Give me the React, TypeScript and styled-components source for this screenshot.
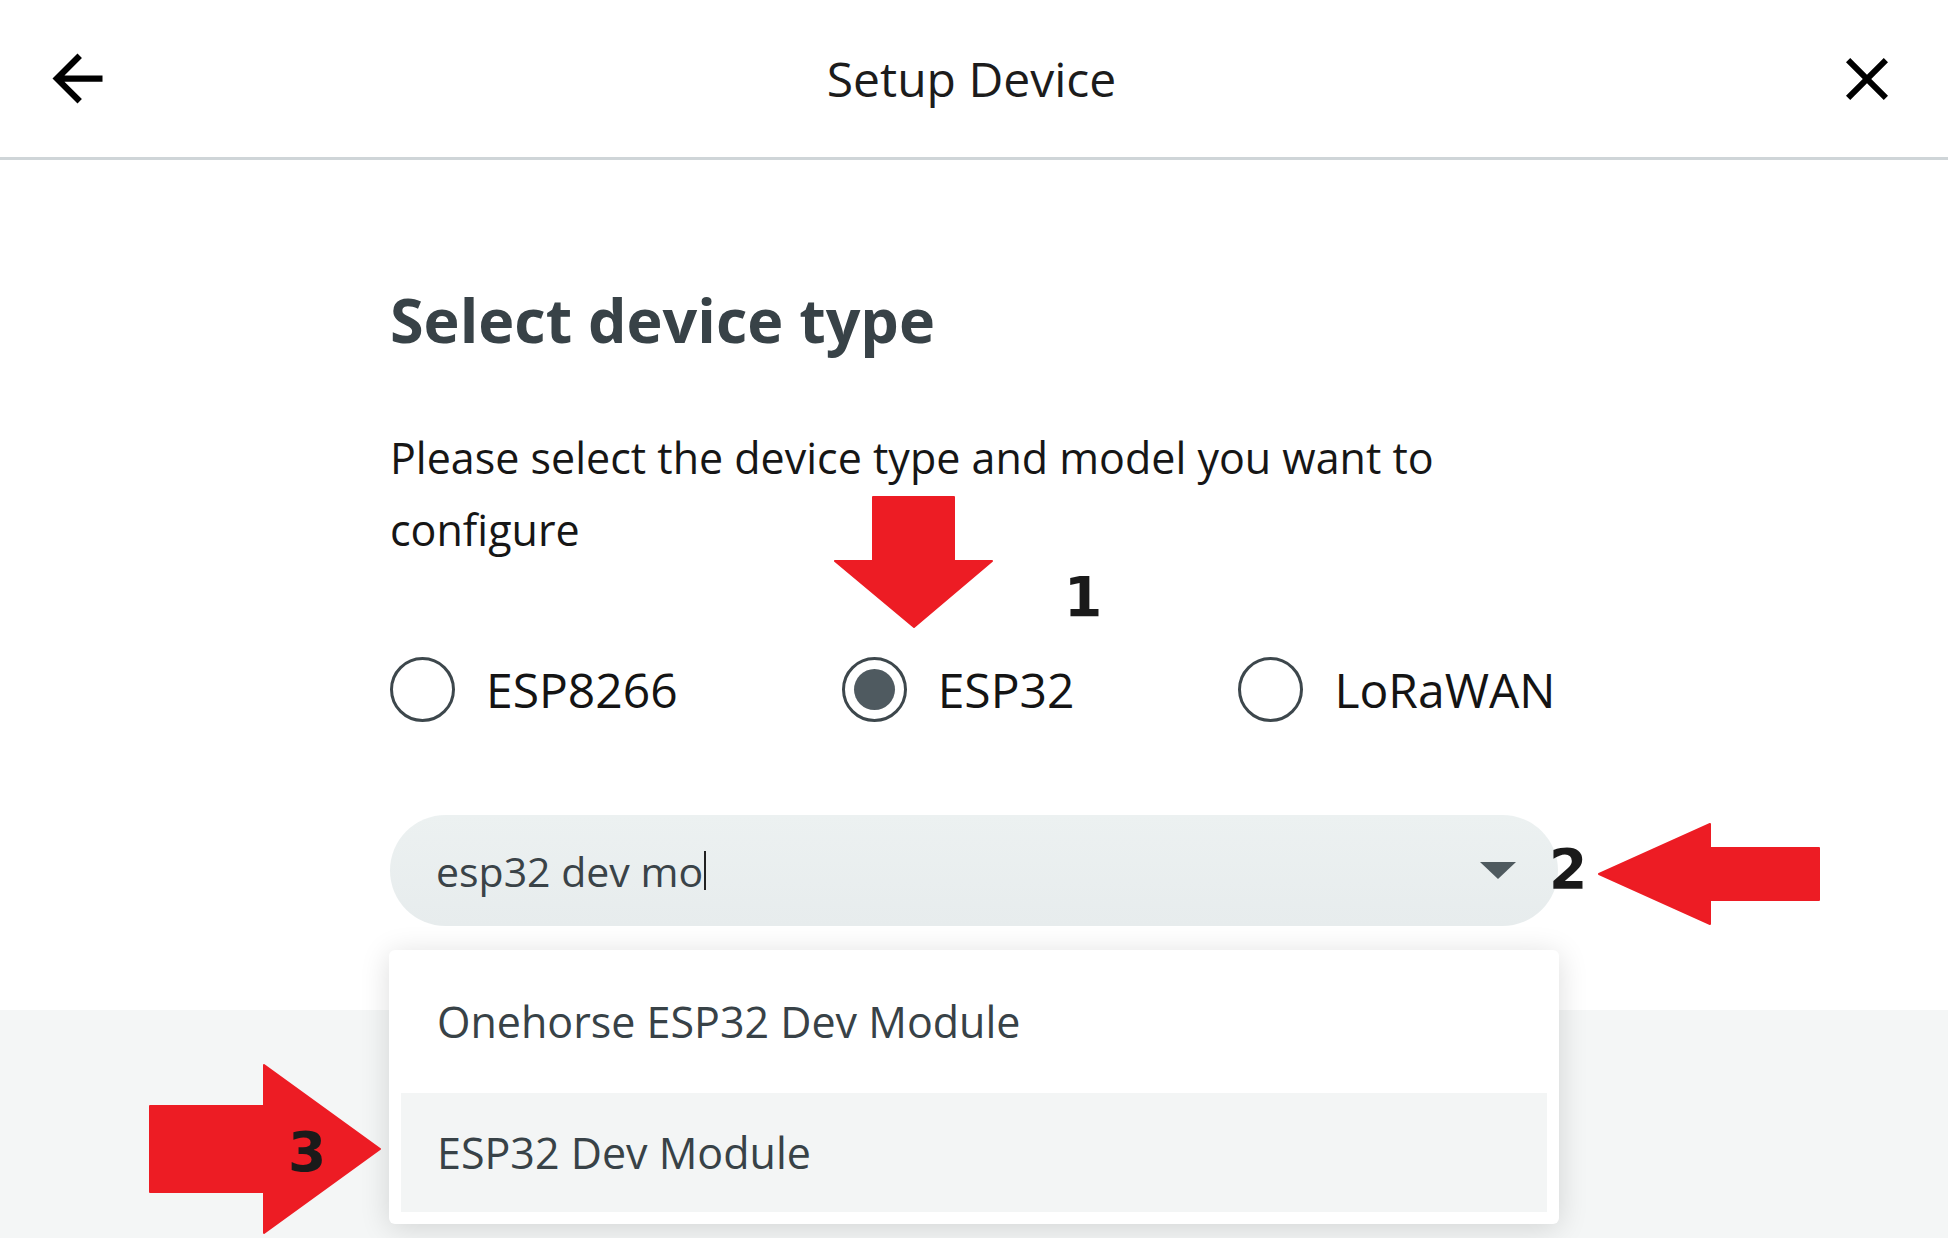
import React from "react";
import styled, { createGlobalStyle } from "styled-components";

const GlobalStyle = createGlobalStyle`
  html, body {
    margin: 0;
    padding: 0;
    background: #ffffff;
  }
  * {
    box-sizing: border-box;
  }
`;

const Page = styled.div`
  position: relative;
  width: 1948px;
  height: 100vh;
  min-height: 1238px;
  display: flex;
  flex-direction: column;
  overflow: hidden;
  font-family: "Open Sans", "Noto Sans", sans-serif;
`;

const Header = styled.header`
  height: 160px;
  flex: 0 0 auto;
  display: grid;
  grid-template-columns: 1fr auto 1fr;
  align-items: center;
  padding: 0 45px 0 40px;
  border-bottom: 3px solid #cfd5d8;
  background: #fff;
`;

const IconButton = styled.button<{ $align: "start" | "end" }>`
  justify-self: ${(p) => p.$align};
  border: none;
  background: none;
  padding: 0;
  display: flex;
  color: #000;
  cursor: pointer;
`;

const Title = styled.h1`
  margin: 0;
  font-size: 48px;
  font-weight: 400;
  line-height: 157px;
  color: #1c1c1c;
`;

const Main = styled.main`
  flex: 0 0 auto;
  background: #fff;
  padding: 123px 0 84px;
`;

const Content = styled.div`
  width: 1168px;
  margin: 0 auto;
`;

const Heading = styled.h2`
  margin: 0 0 66px;
  font-size: 61px;
  font-weight: 700;
  line-height: 73px;
  color: #384247;
`;

const Lead = styled.p`
  margin: 0;
  font-size: 43px;
  line-height: 72px;
  color: #161616;
`;

const RadioRow = styled.div`
  margin-top: 91px;
  height: 65px;
  display: flex;
  align-items: center;
  gap: 164px;
`;

const RadioOption = styled.label`
  display: flex;
  align-items: center;
  gap: 31px;
  font-size: 48px;
  line-height: 65px;
  color: #141414;
`;

const RadioCircle = styled.span<{ $checked?: boolean }>`
  width: 65px;
  height: 65px;
  border-radius: 50%;
  border: 3px solid #3d474c;
  display: flex;
  align-items: center;
  justify-content: center;
  &::after {
    content: "";
    width: 41px;
    height: 41px;
    border-radius: 50%;
    background: #4f5a60;
    display: ${(p) => (p.$checked ? "block" : "none")};
  }
`;

const ComboWrap = styled.div`
  position: relative;
  margin-top: 93px;
`;

const Combo = styled.div`
  height: 111px;
  border-radius: 56px;
  background: linear-gradient(#ecf1f1, #e7eced);
  display: flex;
  align-items: center;
  justify-content: space-between;
  padding: 0 42px 0 46px;
`;

const ComboText = styled.span`
  font-size: 41px;
  color: #3a4348;
  display: flex;
  align-items: center;
`;

const Caret = styled.span`
  display: inline-block;
  width: 2px;
  height: 39px;
  margin-left: 1px;
  background: #222;
`;

const Menu = styled.ul`
  position: absolute;
  top: calc(100% + 24px);
  left: -1px;
  width: 1170px;
  margin: 0;
  padding: 12px;
  list-style: none;
  background: #fff;
  border-radius: 6px;
  box-shadow: 0 4px 30px rgba(0, 0, 0, 0.14);
  display: flex;
  flex-direction: column;
  gap: 12px;
  z-index: 2;
`;

const MenuItem = styled.li<{ $active?: boolean }>`
  height: 119px;
  display: flex;
  align-items: center;
  padding-left: 36px;
  font-size: 43px;
  color: #384247;
  background: ${(p) => (p.$active ? "#f3f5f5" : "transparent")};
`;

const Footer = styled.footer`
  flex: 1 1 auto;
  background: #f4f6f6;
`;

const Annotations = styled.svg`
  position: absolute;
  left: 0;
  top: 0;
  width: 1948px;
  height: 1238px;
  pointer-events: none;
  z-index: 3;
`;

const StepNumber = styled.span<{ $x: number; $y: number }>`
  position: absolute;
  left: ${(p) => p.$x}px;
  top: ${(p) => p.$y}px;
  font-family: "DejaVu Sans", sans-serif;
  font-weight: 700;
  font-size: 55px;
  line-height: 1;
  color: #1a1a1a;
  z-index: 4;
`;

const BackIcon = () => (
  <svg width="75" height="75" viewBox="0 0 24 24" fill="currentColor">
    <path d="M20 11H7.83l5.59-5.59L12 4l-8 8 8 8 1.41-1.41L7.83 13H20v-2z" />
  </svg>
);

const CloseIcon = () => (
  <svg width="72" height="72" viewBox="0 0 24 24" fill="currentColor">
    <path d="M19 6.41L17.59 5 12 10.59 6.41 5 5 6.41 10.59 12 5 17.59 6.41 19 12 13.41 17.59 19 19 17.59 13.41 12z" />
  </svg>
);

const DropTriangle = () => (
  <svg width="36" height="17" viewBox="0 0 36 17">
    <path d="M0 0h36L18 17z" fill="#4f5a5f" />
  </svg>
);

const types = ["ESP8266", "ESP32", "LoRaWAN"];
const models = ["Onehorse ESP32 Dev Module", "ESP32 Dev Module"];

export default function App() {
  return (
    <Page>
      <GlobalStyle />
      <Header>
        <IconButton $align="start">
          <BackIcon />
        </IconButton>
        <Title>Setup Device</Title>
        <IconButton $align="end">
          <CloseIcon />
        </IconButton>
      </Header>
      <Main>
        <Content>
          <Heading>Select device type</Heading>
          <Lead>Please select the device type and model you want to configure</Lead>
          <RadioRow>
            {types.map((t) => (
              <RadioOption key={t}>
                <RadioCircle $checked={t === "ESP32"} />
                {t}
              </RadioOption>
            ))}
          </RadioRow>
          <ComboWrap>
            <Combo>
              <ComboText>
                esp32 dev mo
                <Caret />
              </ComboText>
              <DropTriangle />
            </Combo>
            <Menu>
              {models.map((m) => (
                <MenuItem key={m} $active={m === "ESP32 Dev Module"}>
                  {m}
                </MenuItem>
              ))}
            </Menu>
          </ComboWrap>
        </Content>
      </Main>
      <Footer />
      <Annotations viewBox="0 0 1948 1238">
        <g fill="#ed1c24" stroke="#ed1c24" strokeWidth="2" strokeLinejoin="round">
          <polygon points="873,497 954,497 954,561 992,561 914,627 835,561 873,561" />
          <polygon points="1599,874 1710,824 1710,848 1819,848 1819,900 1710,900 1710,924" />
          <polygon points="150,1106 264,1106 264,1065 380,1149 264,1233 264,1192 150,1192" />
        </g>
      </Annotations>
      <StepNumber $x={1064} $y={570}>1</StepNumber>
      <StepNumber $x={1549} $y={842}>2</StepNumber>
      <StepNumber $x={288} $y={1125}>3</StepNumber>
    </Page>
  );
}
